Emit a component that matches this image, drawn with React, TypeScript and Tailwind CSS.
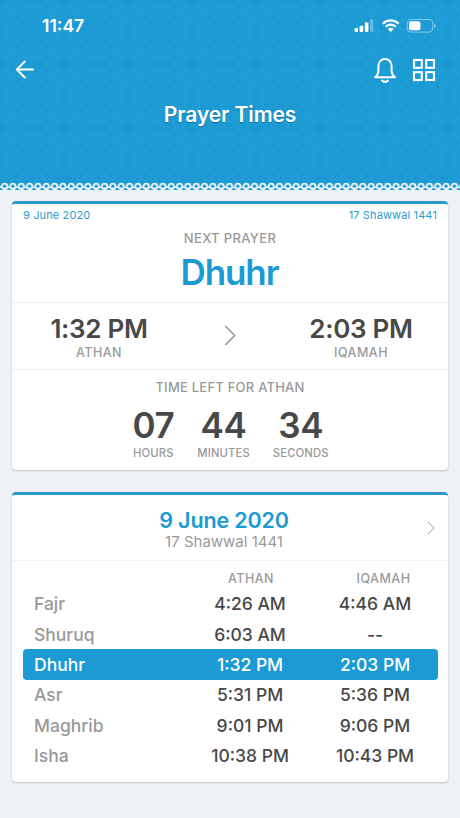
import React from "react";

type Prayer = { name: string; athan: string; iqamah: string };

const prayers: Prayer[] = [
  { name: "Fajr", athan: "4:26 AM", iqamah: "4:46 AM" },
  { name: "Shuruq", athan: "6:03 AM", iqamah: "--" },
  { name: "Dhuhr", athan: "1:32 PM", iqamah: "2:03 PM" },
  { name: "Asr", athan: "5:31 PM", iqamah: "5:36 PM" },
  { name: "Maghrib", athan: "9:01 PM", iqamah: "9:06 PM" },
  { name: "Isha", athan: "10:38 PM", iqamah: "10:43 PM" },
];

const current = "Dhuhr";

const HeaderPattern: React.FC = () => (
  <svg className="absolute inset-0 w-full h-full" aria-hidden="true">
    <defs>
      <pattern id="stars" width="64" height="64" patternUnits="userSpaceOnUse">
        <g fill="none" stroke="#45b4e2" strokeOpacity="0.17" strokeWidth="1.5">
          <circle cx="32" cy="32" r="8.5" />
          <circle cx="0" cy="0" r="8.5" />
          <circle cx="64" cy="0" r="8.5" />
          <circle cx="0" cy="64" r="8.5" />
          <circle cx="64" cy="64" r="8.5" />
          <circle cx="32" cy="14" r="5" />
          <circle cx="32" cy="50" r="5" />
          <circle cx="14" cy="32" r="5" />
          <circle cx="50" cy="32" r="5" />
          <circle cx="17" cy="17" r="5.5" />
          <circle cx="47" cy="17" r="5.5" />
          <circle cx="17" cy="47" r="5.5" />
          <circle cx="47" cy="47" r="5.5" />
          <path d="M32 0v9M32 55v9M0 32h9M55 32h9M6 6l7 7M58 6l-7 7M6 58l7-7M58 58l-7-7" />
          <path d="M16 0l4 8 12-3 12 3 4-8M16 64l4-8 12 3 12-3 4 8M0 16l8 4-3 12 3 12-8 4M64 16l-8 4 3 12-3 12 8 4" />
        </g>
      </pattern>
    </defs>
    <rect width="100%" height="100%" fill="url(#stars)" />
  </svg>
);

const Lace: React.FC = () => (
  <svg className="absolute bottom-0 left-0 w-full h-[8px]" aria-hidden="true">
    <defs>
      <pattern id="lace" x="0.4" width="8.33" height="8" patternUnits="userSpaceOnUse">
        <path d="M0 5.2h8.33" stroke="#eef4f7" strokeWidth="1.6" />
        <circle cx="4.17" cy="4.4" r="2.7" fill="#1b9ad4" stroke="#eef4f7" strokeWidth="1.8" />
        <path d="M4.17 5.4v2.6" stroke="#eef4f7" strokeWidth="1.6" />
      </pattern>
    </defs>
    <rect width="100%" height="8" fill="url(#lace)" />
  </svg>
);

const StatusBar: React.FC = () => (
  <div className="relative flex h-[52px] items-center justify-between pl-[42px] pr-[24px]">
    <span className="text-[17.5px] font-semibold leading-5">11:47</span>
    <svg width="82" height="16" viewBox="0 0 82 16" fill="#fff">
      <rect x="0.5" y="10" width="3.6" height="4" rx="1" />
      <rect x="5.6" y="7.8" width="3.6" height="6.2" rx="1" />
      <rect x="10.8" y="4.6" width="3.6" height="9.4" rx="1" />
      <rect x="16" y="1.3" width="3.4" height="12.7" rx="1" fillOpacity="0.3" />
      <g fill="none" stroke="#fff" strokeWidth="2.3">
        <path d="M28.8 5.7a11.2 11.2 0 0 1 15.8 0" />
        <path d="M31.7 8.8a7 7 0 0 1 10 0" />
      </g>
      <path d="M36.7 13.9l-2.8-2.8a4 4 0 0 1 5.6 0z" />
      <rect x="53.2" y="1.5" width="25.6" height="12.6" rx="3.6" fill="none" stroke="#fff" strokeOpacity="0.45" />
      <rect x="55" y="3.3" width="11.4" height="9" rx="2" />
      <path d="M80.2 5.8c2 .7 2 3.3 0 4z" fillOpacity="0.5" />
    </svg>
  </div>
);

const Chevron: React.FC<{ className?: string }> = ({ className }) => (
  <svg className={className} viewBox="0 0 12 22" fill="none" stroke="#8e8e8e" strokeWidth="1.4">
    <path d="M1 1l10 10L1 21" />
  </svg>
);

const Header: React.FC = () => (
  <header className="relative h-[190px] bg-[#1b9ad4] text-white">
    <HeaderPattern />
    <StatusBar />
    <div className="relative flex h-[36px] items-center justify-between pl-[15px] pr-[24px]">
      <svg width="20" height="20" viewBox="0 0 20 20" fill="none" stroke="#fff" strokeWidth="2" strokeLinecap="round" strokeLinejoin="round">
        <path d="M18 9.5H2M9.8 1.5l-8 8 8 8" />
      </svg>
      <div className="flex items-center gap-[15px]">
        <svg width="24" height="26" viewBox="0 0 24 26" fill="none" stroke="#fff" strokeWidth="2" strokeLinejoin="round">
          <path d="M2 20.2h20c-2.4-1.7-3.4-3.4-3.4-6.6V9.6C18.6 5 16 1.9 12 1.9S5.4 5 5.4 9.6v4c0 3.2-1 4.9-3.4 6.6z" />
          <path d="M9 22.8c.6 2.7 5.4 2.7 6 0" />
        </svg>
        <svg width="24" height="24" viewBox="0 0 24 24" fill="none" stroke="#fff" strokeWidth="2.1">
          <rect x="2" y="2" width="7.8" height="7.8" />
          <rect x="14.2" y="2" width="7.8" height="7.8" />
          <rect x="2" y="14.2" width="7.8" height="7.8" />
          <rect x="14.2" y="14.2" width="7.8" height="7.8" />
        </svg>
      </div>
    </div>
    <h1 className="relative pt-[13px] text-center text-[21px] font-semibold leading-7 tracking-[-0.1px] [text-shadow:0_1px_1px_rgba(0,0,0,0.3)]">
      Prayer Times
    </h1>
    <Lace />
  </header>
);

const TimeBlock: React.FC<{ time: string; label: string }> = ({ time, label }) => (
  <div className="flex w-[124px] flex-col items-center">
    <span className="pt-px text-[26px] font-semibold leading-8 tracking-[-0.3px] text-[#484848]">{time}</span>
    <span className="text-[12.5px] font-medium leading-4 tracking-[0.5px] text-[#999]">{label}</span>
  </div>
);

const Counter: React.FC<{ value: string; label: string }> = ({ value, label }) => (
  <div className="flex flex-col items-center">
    <span className="text-[35px] font-semibold leading-10 tracking-[-0.3px] text-[#484848]">{value}</span>
    <span className="text-[11.3px] font-medium leading-4 tracking-[0.1px] text-[#999]">{label}</span>
  </div>
);

const NextPrayer: React.FC = () => (
  <section className="h-[269px] rounded-[4px] border-t-[3px] border-[#2b9ac8] bg-white shadow-[0_1px_2px_rgba(0,0,0,0.2)]">
    <div className="flex h-[99px] flex-col border-b border-[#eceef0]">
      <div className="flex justify-between px-[11px] pt-[3px] text-[11px] leading-4 tracking-[0.13px] text-[#2b9ccb]">
        <span>9 June 2020</span>
        <span>17 Shawwal 1441</span>
      </div>
      <div className="mt-[7px] text-center text-[13px] font-medium leading-4 tracking-[0.35px] text-[#999]">NEXT PRAYER</div>
      <div className="mt-[4px] pr-[1px] text-center text-[35px] font-semibold leading-[44px] tracking-[-1.1px] text-[#1b9ad4]">{current}</div>
    </div>
    <div className="flex h-[67px] items-center justify-between border-b border-[#eceef0] px-[25px]">
      <TimeBlock time="1:32 PM" label="ATHAN" />
      <Chevron className="mb-[2px] h-[21px] w-[12px]" />
      <TimeBlock time="2:03 PM" label="IQAMAH" />
    </div>
    <div className="flex flex-col items-center pt-[9px]">
      <div className="text-[13px] font-medium leading-4 tracking-[0.23px] text-[#999]">TIME LEFT FOR ATHAN</div>
      <div className="mt-[10px] flex gap-[23px] pl-[1px]">
        <Counter value="07" label="HOURS" />
        <Counter value="44" label="MINUTES" />
        <Counter value="34" label="SECONDS" />
      </div>
    </div>
  </section>
);

const Row: React.FC<{ prayer: Prayer }> = ({ prayer }) => {
  const active = prayer.name === current;
  return (
    <div
      className={
        "grid h-[30.4px] grid-cols-[1fr_125px_125px] items-center rounded-[4px] pt-px text-[17.5px] font-medium " +
        (active ? "bg-[#1b9ad4] text-white" : "text-[#484848]")
      }
    >
      <span className={active ? "pl-[11px]" : "pl-[11px] text-[#999]"}>{prayer.name}</span>
      <span className="text-center">{prayer.athan}</span>
      <span className="text-center">{prayer.iqamah}</span>
    </div>
  );
};

const Timetable: React.FC = () => (
  <section className="mt-[22px] h-[290px] rounded-[4px] border-t-[3px] border-[#2b9ac8] bg-white shadow-[0_1px_2px_rgba(0,0,0,0.2)]">
    <div className="flex h-[66px] items-center border-b border-[#f0f2f4] pr-[13px]">
      <div className="flex-1 pl-[9px] pt-[5px] text-center">
        <h2 className="text-[21.5px] font-semibold leading-6 tracking-[-0.15px] text-[#1b9ad4]">9 June 2020</h2>
        <p className="text-[15px] leading-5 text-[#999]">17 Shawwal 1441</p>
      </div>
      <Chevron className="h-[14px] w-[8px]" />
    </div>
    <div className="pl-[11px] pr-[10.5px] pt-[10px]">
      <div className="grid grid-cols-[1fr_125px_125px] pb-[1.6px] text-center text-[12.5px] font-medium leading-4 tracking-[0.5px] text-[#999]">
        <span />
        <span className="pl-[2px]">ATHAN</span>
        <span className="pr-[27px] text-right">IQAMAH</span>
      </div>
      {prayers.map((p) => (
        <Row key={p.name} prayer={p} />
      ))}
    </div>
  </section>
);

const App: React.FC = () => (
  <div className="h-[818px] w-[460px] overflow-hidden bg-[#eef2f5] font-['Inter',sans-serif]">
    <Header />
    <main className="px-[12px] pt-[11px]">
      <NextPrayer />
      <Timetable />
    </main>
  </div>
);

export default App;
